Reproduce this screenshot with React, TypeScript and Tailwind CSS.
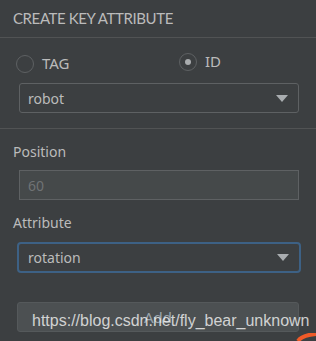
import React from 'react';

const Caret = () => (
  <svg width="12" height="7" viewBox="0 0 12 7" className="shrink-0">
    <path d="M0 0 L12 0 L6 7 Z" fill="#a9adb0" />
  </svg>
);

export default function App() {
  return (
    <div className="relative w-[316px] h-[341px] overflow-hidden bg-[#3c3f41] text-[#bbbbbb] font-['Noto_Sans','Open_Sans',sans-serif]">
      <div className="h-[38px] border-b border-[#515354] pl-[13px] pt-[9px] text-[15px] leading-[18px] font-['Lato',sans-serif] tracking-[-0.4px]">
        CREATE KEY ATTRIBUTE
      </div>

      <div className="border-b border-[#515354] h-[91px]">
        <div className="flex items-center h-[44px] pt-[6px]">
          <label className="flex items-center gap-[8px] w-[179px] pl-[16px] mt-[1px]">
            <span className="w-[18px] h-[18px] rounded-full border border-[#5e6163] bg-[#3c3f41]" />
            <span className="text-[15px]">TAG</span>
          </label>
          <label className="flex items-center gap-[8px] -mt-[3px]">
            <span className="w-[18px] h-[18px] rounded-full border border-[#5e6163] flex items-center justify-center">
              <span className="w-[6px] h-[6px] rounded-full bg-[#a9acae]" />
            </span>
            <span className="text-[15px]">ID</span>
          </label>
        </div>
        <div className="ml-[19px] mt-[1px] w-[280px] h-[30px] rounded-[3px] border border-[#5e6163] flex items-center justify-between pl-[8px] pr-[10px] text-[14px]">
          <span>robot</span>
          <Caret />
        </div>
      </div>

      <div className="pl-[13px] pt-[14px] text-[14px] leading-[18px]">Position</div>
      <div className="ml-[19px] mt-[9px] w-[280px] h-[30px] border border-[#5e6163] bg-[#45494a] flex items-center pl-[8px] text-[14px] text-[#707375]">
        60
      </div>

      <div className="pl-[13px] pt-[14px] text-[14px] leading-[18px]">Attribute</div>
      <div className="ml-[17px] mt-[10px] w-[284px] h-[31px] rounded-[4px] border-2 border-[#3d6185] flex items-center justify-between pl-[9px] pr-[10px] text-[14px]">
        <span>rotation</span>
        <Caret />
      </div>

      <div className="ml-[17px] mt-[29px] w-[282px] h-[30px] rounded-[3px] border border-[#55595b] bg-[#4c5052] flex items-start justify-center pt-[3px] text-[15px] text-[#9aa4ad]">
        Add
      </div>

      <div className="absolute left-[32px] top-[311px] text-[16px] leading-[20px] text-white/75 font-['Liberation_Sans',Arial,sans-serif] whitespace-nowrap">
        https://blog.csdn.net/fly_bear_unknown
      </div>
      <svg className="absolute right-0 bottom-0" width="20" height="8" viewBox="0 0 20 8">
        <path d="M2 8 Q6 2 20 1" stroke="#f05a28" strokeWidth="4" fill="none" />
      </svg>
    </div>
  );
}
